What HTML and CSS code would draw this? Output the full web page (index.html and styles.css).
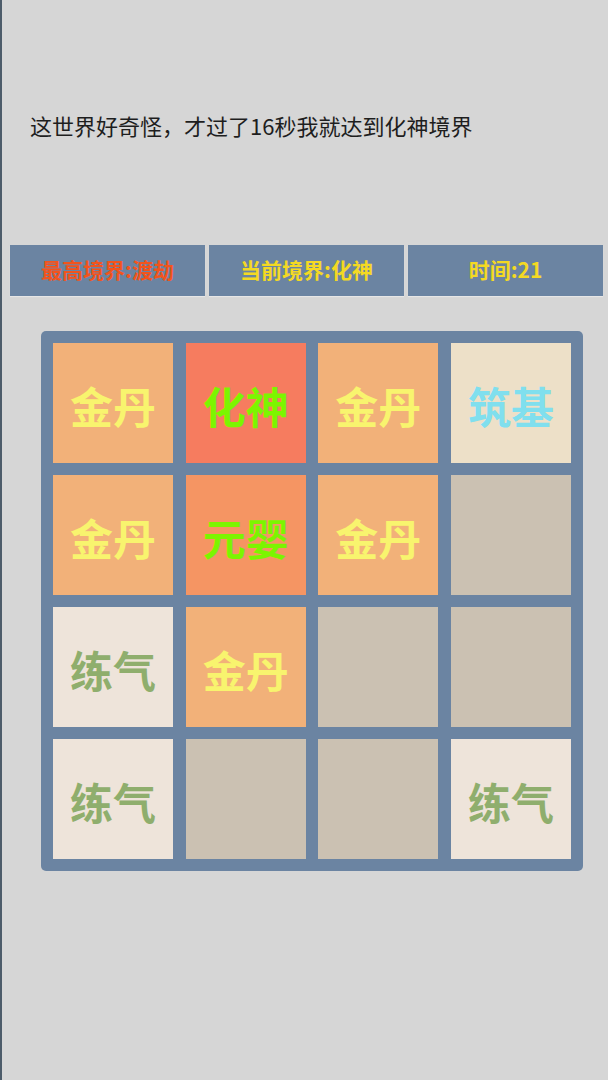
FILE: index.html
```html
<!DOCTYPE html>
<html lang="zh">
<head>
  <meta charset="UTF-8">
  <meta name="viewport" content="width=device-width, initial-scale=1.0">
  <title>修仙2048</title>
  <link rel="stylesheet" href="styles.css">
</head>
<body>
  <div class="page">
    <p class="tip">这世界好奇怪，才过了16秒我就达到化神境界</p>

    <div class="stats">
      <div class="stat best">最高境界:渡劫</div>
      <div class="stat">当前境界:化神</div>
      <div class="stat">时间:21</div>
    </div>

    <!-- 棋盘 -->
    <div class="board">
      <div class="cell lv4">金丹</div>
      <div class="cell lv6">化神</div>
      <div class="cell lv4">金丹</div>
      <div class="cell lv2">筑基</div>

      <div class="cell lv4">金丹</div>
      <div class="cell lv5">元婴</div>
      <div class="cell lv4">金丹</div>
      <div class="cell"></div>

      <div class="cell lv1">练气</div>
      <div class="cell lv4">金丹</div>
      <div class="cell"></div>
      <div class="cell"></div>

      <div class="cell lv1">练气</div>
      <div class="cell"></div>
      <div class="cell"></div>
      <div class="cell lv1">练气</div>
    </div>
  </div>
</body>
</html>
```

FILE: styles.css
```css
html, body {
  margin: 0;
  height: 100%;
}
body {
  background: #d6d6d6;
  font-family: "Noto Sans CJK SC", "Noto Sans", sans-serif;
  color: #1e1e1e;
}
.page {
  min-height: 100%;
  border-left: 2px solid #4d5c6a;
  box-sizing: border-box;
}
.tip {
  margin: 0;
  padding: 109px 0 0 28px;
  font-size: 22px;
  line-height: 32px;
}
.stats {
  display: flex;
  gap: 4px;
  margin: 104px 0 0 8px;
}
.stat {
  width: 195px;
  height: 51px;
  padding-bottom: 3px;
  box-sizing: border-box;
  background: #6b84a2;
  color: #f4d923;
  font-size: 21px;
  font-weight: bold;
  display: flex;
  align-items: center;
  justify-content: center;
  box-shadow: 0 1px 1px rgba(255,255,255,0.4);
}
.stat.best { color: #f2541d; }
.board {
  width: 542px;
  height: 540px;
  box-sizing: border-box;
  margin: 35px 0 0 39px;
  padding: 12px;
  background: #6b84a2;
  border-radius: 5px;
  display: grid;
  grid-template-columns: repeat(4, 1fr);
  grid-template-rows: repeat(4, 1fr);
  column-gap: 12.7px;
  row-gap: 12px;
}
.cell {
  background: #cbc1b2;
  display: flex;
  align-items: center;
  justify-content: center;
  padding-top: 4px;
  box-sizing: border-box;
  font-size: 43px;
  font-weight: bold;
}
.lv1 { background: #eee4da; color: #8fae6d; }
.lv2 { background: #ede0c8; color: #80dfee; }
.lv4 { background: #f2b179; color: #f8f46e; }
.lv5 { background: #f59563; color: #7cf500; }
.lv6 { background: #f67c5f; color: #7cf500; }
```
